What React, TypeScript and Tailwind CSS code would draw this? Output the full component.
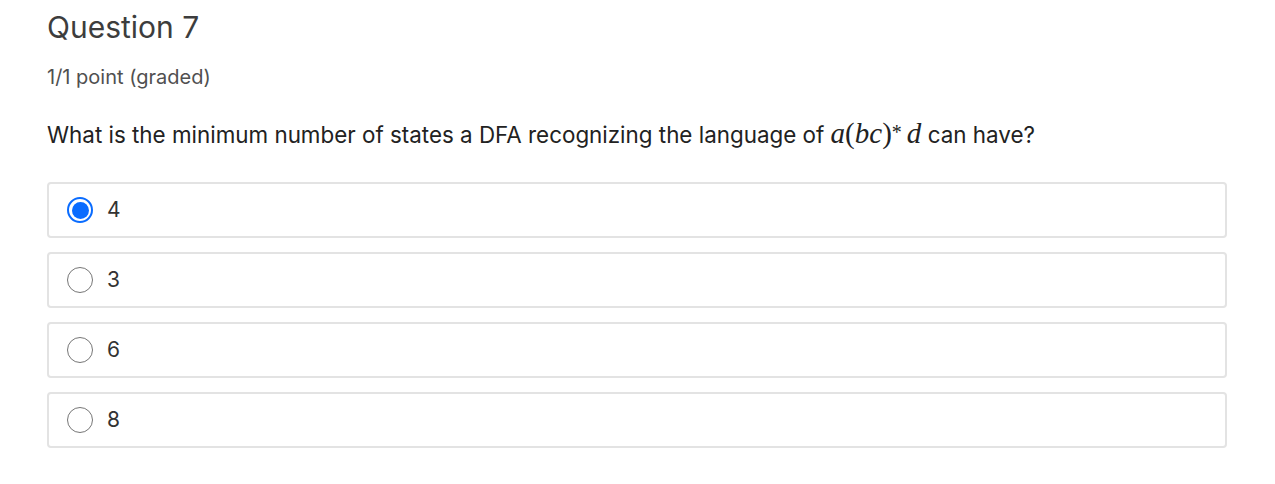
import React from 'react';

const options = ['4', '3', '6', '8'];

const Radio: React.FC<{ checked: boolean }> = ({ checked }) =>
    checked ? (
        <span className="w-[26px] h-[26px] rounded-full border-2 border-[#0a6cff] flex items-center justify-center flex-shrink-0">
            <span className="w-[17px] h-[17px] rounded-full bg-[#0a6cff]" />
        </span>
    ) : (
        <span className="w-[26px] h-[26px] rounded-full border-[1.5px] border-[#767676] flex-shrink-0" />
    );

const App: React.FC = () => {
    return (
        <div className="w-[1275px] h-[484px] bg-white pl-[47px] pr-[48px] pt-[8px] font-['Inter',sans-serif] text-[#333]">
            <h2 className="text-[30px] leading-[38px] text-[#3d3d3d]">Question 7</h2>
            <p className="mt-[20px] text-[20px] leading-[22px] text-[#505050]">1/1 point (graded)</p>
            <p className="mt-[31px] h-[28px] text-[22.4px] leading-[28px] text-[#222]">
                What is the minimum number of states a DFA recognizing the language of{' '}
                <span className="font-['Liberation_Serif',serif] text-[29px] leading-none">
                    <i>a</i>(<i>bc</i>)<sup className="text-[20px] relative top-[-4px] leading-none">*</sup>
                    <i className="ml-[5px]">d</i>
                </span>{' '}
                can have?
            </p>
            <div className="mt-[35px] flex flex-col gap-[14px]">
                {options.map((opt, i) => (
                    <div
                        key={opt}
                        className="h-[56px] border-2 border-[#e3e3e3] rounded-[4px] flex items-center pl-[18px] gap-[14px]"
                    >
                        <Radio checked={i === 0} />
                        <span className="text-[21px] text-[#333]">{opt}</span>
                    </div>
                ))}
            </div>
        </div>
    );
};

export default App;
